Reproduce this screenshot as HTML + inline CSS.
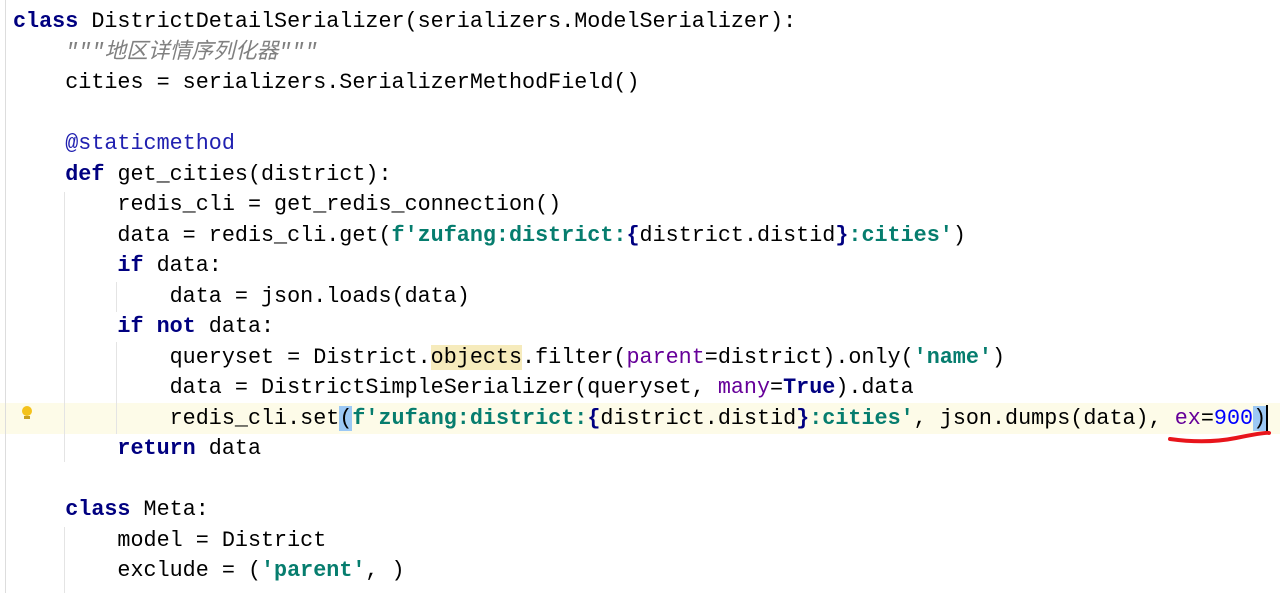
<!DOCTYPE html>
<html><head><meta charset="utf-8"><style>
html,body{margin:0;padding:0;background:#fff;width:1280px;height:593px;overflow:hidden;position:relative}
pre{position:absolute;left:13px;top:7px;margin:0;font-family:"Liberation Mono","Noto Sans CJK SC",monospace;font-size:21.75px;line-height:30.5px;color:#000;letter-spacing:0}
.k{color:#000080;font-weight:bold}
.s{color:#067d6e;font-weight:bold}
.n{color:#0000ff}
.p{color:#660099}
.d{color:#2020b0}
.c{color:#808080;font-style:italic}
.hl{background:#f6ebbc}
.br{background:#9cc8f4}
.row{position:absolute;left:0;width:1280px;top:403px;height:31px;background:#fdfbe8}
.g{position:absolute;left:5px;top:0;width:1px;height:593px;background:#ddd}
.ig{position:absolute;width:1px;background:#e4e4e4}
</style></head><body>
<div class="row"></div>
<div class="g"></div>
<div class="ig" style="left:64px;top:192px;height:270px"></div>
<div class="ig" style="left:116px;top:282px;height:30px"></div>
<div class="ig" style="left:116px;top:342px;height:92px"></div>
<div class="ig" style="left:64px;top:527px;height:66px"></div>
<div style="position:absolute;left:22px;top:406px;width:10px;height:10px;border-radius:50%;background:#f4c21b"></div>
<div style="position:absolute;left:24px;top:416px;width:6px;height:3px;background:#c9a020"></div>
<svg style="position:absolute;left:1166px;top:428px" width="106" height="16"><path d="M4 11 Q40 16 70 10 T103 5" stroke="#e8151b" stroke-width="4" fill="none" stroke-linecap="round"/></svg>
<div style="position:absolute;left:1266px;top:405px;width:2px;height:26px;background:#000"></div>
<pre><span class="k">class</span> DistrictDetailSerializer(serializers.ModelSerializer):
    <span class="c">"""地区详情序列化器"""</span>
    cities = serializers.SerializerMethodField()

    <span class="d">@staticmethod</span>
    <span class="k">def</span> get_cities(district):
        redis_cli = get_redis_connection()
        data = redis_cli.get(<span class="s">f'zufang:district:</span><span class="k">{</span>district.distid<span class="k">}</span><span class="s">:cities'</span>)
        <span class="k">if</span> data:
            data = json.loads(data)
        <span class="k">if not</span> data:
            queryset = District.<span class="hl">objects</span>.filter(<span class="p">parent</span>=district).only(<span class="s">'name'</span>)
            data = DistrictSimpleSerializer(queryset, <span class="p">many</span>=<span class="k">True</span>).data
            redis_cli.set<span class="br">(</span><span class="s">f'zufang:district:</span><span class="k">{</span>district.distid<span class="k">}</span><span class="s">:cities'</span>, json.dumps(data), <span class="p">ex</span>=<span class="n">900</span><span class="br">)</span>
        <span class="k">return</span> data

    <span class="k">class</span> Meta:
        model = District
        exclude = (<span class="s">'parent'</span>, )
</pre>
</body></html>
